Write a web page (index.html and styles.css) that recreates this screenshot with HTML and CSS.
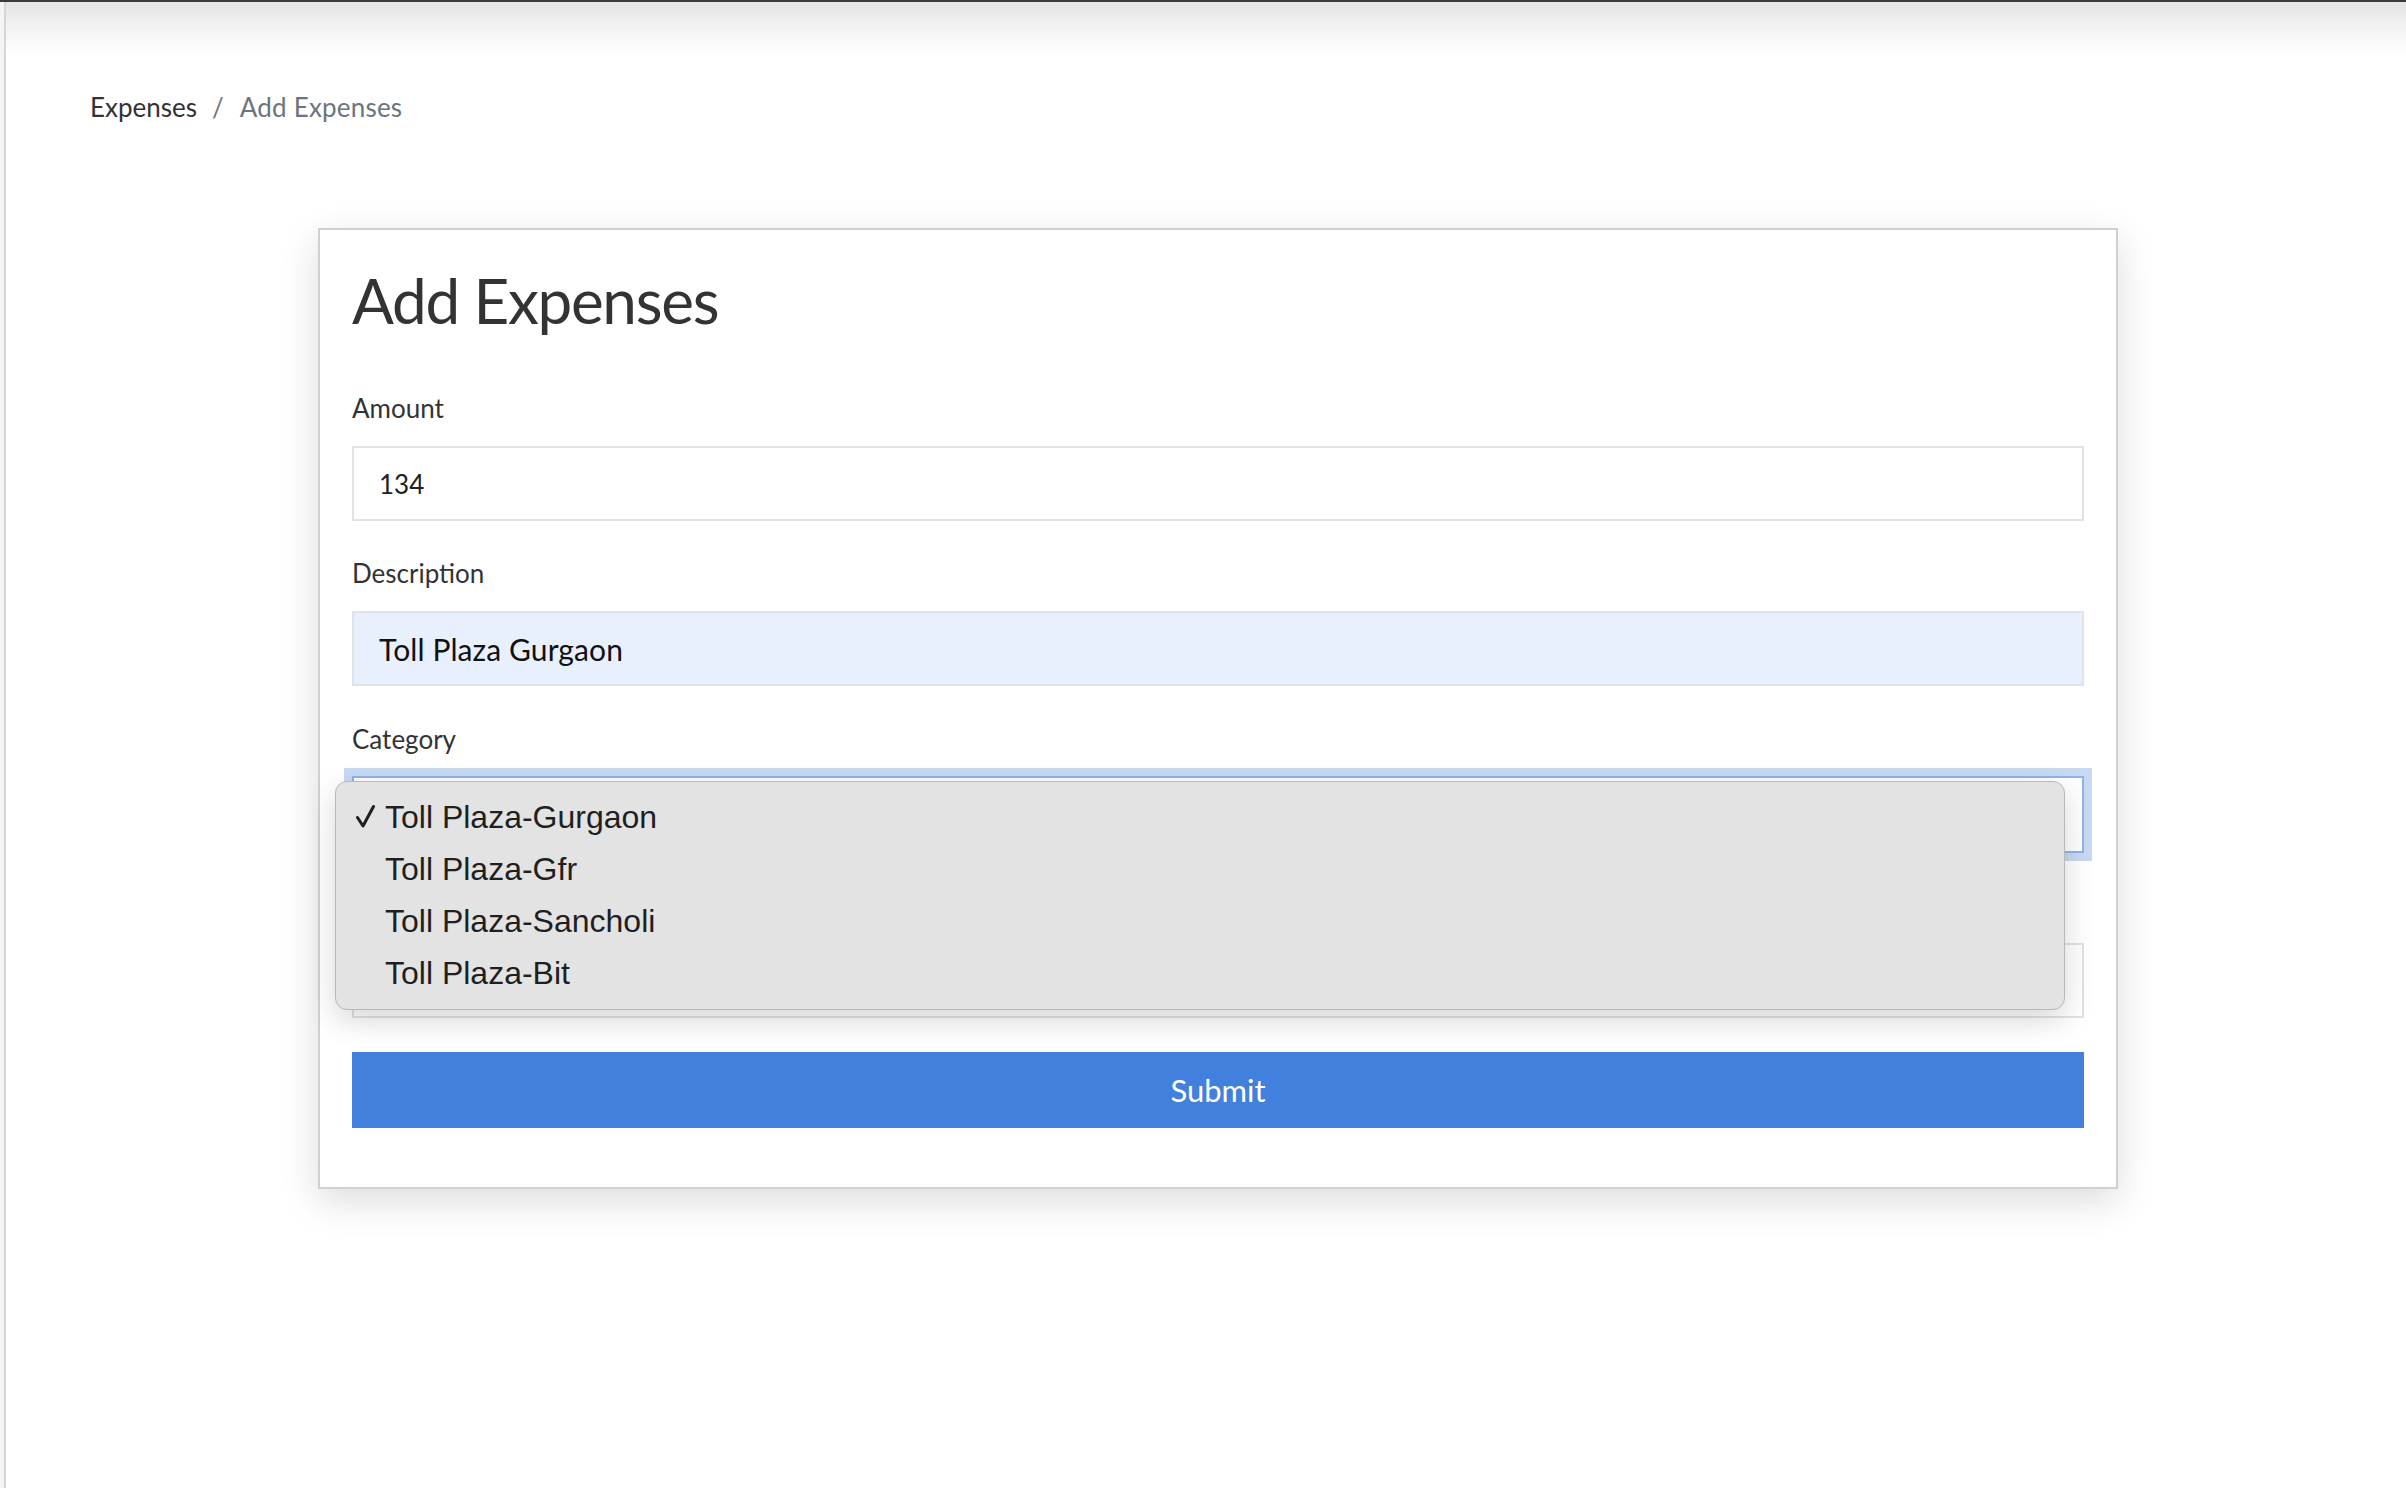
FILE: index.html
```html
<!DOCTYPE html>
<html lang="en">
<head>
<meta charset="utf-8">
<title>Add Expenses</title>
<link rel="stylesheet" href="styles.css">
</head>
<body>
<div class="topbar"></div>
<div class="shell">
  <div class="rail"></div>
  <main class="content">
    <nav class="breadcrumb">
      <span class="crumb">Expenses</span>
      <span class="sep">/</span>
      <span class="crumb current">Add Expenses</span>
    </nav>
    <section class="card">
      <h1 class="card-title">Add Expenses</h1>
      <form class="form">
        <div class="group">
          <label class="label">Amount</label>
          <input class="field" type="text" value="134">
        </div>
        <div class="group">
          <label class="label">Description</label>
          <input class="field autofill" type="text" value="Toll Plaza Gurgaon">
        </div>
        <div class="group select-group">
          <label class="label">Category</label>
          <div class="select focused"></div>
          <ul class="menu">
            <li class="option selected"><svg class="check" viewBox="0 0 20 24" width="20" height="24"><path d="M2.5 13.5 L8 22 L18.5 2.5" fill="none" stroke="#1f1f1f" stroke-width="3" stroke-linecap="round" stroke-linejoin="round"/></svg>Toll Plaza-Gurgaon</li>
            <li class="option">Toll Plaza-Gfr</li>
            <li class="option">Toll Plaza-Sancholi</li>
            <li class="option">Toll Plaza-Bit</li>
          </ul>
        </div>
        <div class="group">
          <div class="label label-empty"></div>
          <input class="field" type="text" value="">
        </div>
        <button class="submit" type="button">Submit</button>
      </form>
    </section>
  </main>
</div>
</body>
</html>
```
FILE: styles.css
```css
html, body {
  margin: 0;
  padding: 0;
  background: #ffffff;
}
body {
  font-family: "Lato", "Liberation Sans", sans-serif;
  color: #333333;
  min-height: 1488px;
}
.topbar {
  height: 2px;
  background: #3a3a3a;
}
.shell {
  display: flex;
  min-height: 1486px;
}
.rail {
  width: 4px;
  flex: none;
  background: #f3f4f6;
  border-right: 2px solid #d6d6d6;
}
.content {
  flex: 1;
  padding: 85px 0 0 84px;
  background: linear-gradient(#e3e3e3 0px, #f3f3f3 25px, #ffffff 55px) no-repeat;
  background-size: 100% 60px;
}
.breadcrumb {
  display: flex;
  align-items: baseline;
  font-size: 26px;
  line-height: 40px;
  height: 40px;
}
.crumb { color: #333333; }
.crumb.current { color: #6c757d; letter-spacing: 0.2px; }
.sep {
  color: #6c757d;
  padding: 0 16px 0 15px;
}
.card {
  margin: 101px 0 0 228px;
  width: 1800px;
  box-sizing: border-box;
  border: 2px solid #d0d0d0;
  background: #ffffff;
  padding: 32px 32px 59px;
  box-shadow: 0 12px 36px rgba(0, 0, 0, 0.14);
}
.card-title {
  margin: 0 0 52px;
  font-size: 62px;
  line-height: 76px;
  letter-spacing: -1.3px;
  font-weight: 400;
  color: #333333;
}
.form {
  display: flex;
  flex-direction: column;
}
.group {
  display: flex;
  flex-direction: column;
  margin-bottom: 34px;
}
.select-group {
  position: relative;
}
.label {
  font-size: 26px;
  line-height: 36px;
  margin-bottom: 20px;
  color: #333333;
}
.select-group .label {
  line-height: 38px;
  margin-bottom: 18px;
}
.label-empty {
  height: 36px;
}
.field {
  height: 75px;
  box-sizing: border-box;
  border: 2px solid #e0e3e7;
  background: #ffffff;
  padding: 0 25px;
  font-family: "Lato", "Liberation Sans", sans-serif;
  font-size: 26px;
  color: #222222;
  outline: none;
  margin: 0;
}
.field.autofill {
  background: #e8f0fe;
  font-size: 30px;
  letter-spacing: 0.1px;
  color: #111111;
}
.select {
  height: 77px;
  box-sizing: border-box;
  border: 2px solid #92b3e6;
  background: #ffffff;
}
.select.focused {
  box-shadow: 0 0 0 8px #c8d9f2;
}
.menu {
  position: absolute;
  left: -17px;
  top: 61px;
  width: 1730px;
  height: 229px;
  box-sizing: border-box;
  margin: 0;
  padding: 9px 0 10px;
  list-style: none;
  background: #e3e3e3;
  border: 1px solid #b9b9b9;
  border-radius: 12px;
  box-shadow: 0 10px 30px rgba(0, 0, 0, 0.16);
  z-index: 2;
}
.option {
  position: relative;
  font-family: "Liberation Sans", Arial, sans-serif;
  font-size: 32px;
  line-height: 52px;
  height: 52px;
  padding-left: 49px;
  color: #1f1f1f;
}
.check {
  position: absolute;
  left: 19px;
  top: 13px;
}
.submit {
  height: 76px;
  border: none;
  background: #4180dc;
  color: #ffffff;
  font-family: "Lato", "Liberation Sans", sans-serif;
  font-size: 31px;
  margin: 0;
  padding: 0;
}
```
